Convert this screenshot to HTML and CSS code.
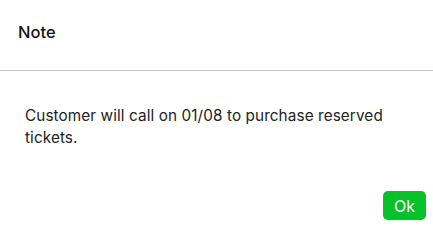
FILE: index.html
```html
<!DOCTYPE html>
<html>
<head>
<meta charset="utf-8">
<link rel="stylesheet" href="styles.css">
</head>
<body>
<div class="dialog">
  <div class="header"><h2 class="title">Note</h2></div>
  <div class="content"><p class="message">Customer will call on 01/08 to purchase reserved tickets.</p></div>
  <div class="actions"><button class="ok">Ok</button></div>
</div>
</body>
</html>
```
FILE: styles.css
```css
html, body { margin: 0; padding: 0; background: #fff; }
body { font-family: "Inter", "Noto Sans", sans-serif; color: #1a1a1a; }
.dialog { width: 433px; height: 226px; display: flex; flex-direction: column; }
.header { height: 71px; border-bottom: 1px solid #c4c4c4; display: flex; align-items: center; padding-left: 18px; box-sizing: border-box; }
.title { margin: 0; font-size: 16.5px; font-weight: 500; color: #141414; margin-top: -6px; }
.content { padding: 34px 25px 0 25px; }
.message { margin: 0; font-size: 15.3px; line-height: 22px; color: #222; width: 385px; letter-spacing: 0.1px; }
.actions { margin-top: auto; display: flex; justify-content: flex-end; padding: 0 7px 6px 0; }
.ok { width: 43px; height: 29px; border: none; border-radius: 5px; background: #05c12a; color: #fff; font-family: inherit; font-size: 16px; padding: 0; }
```
